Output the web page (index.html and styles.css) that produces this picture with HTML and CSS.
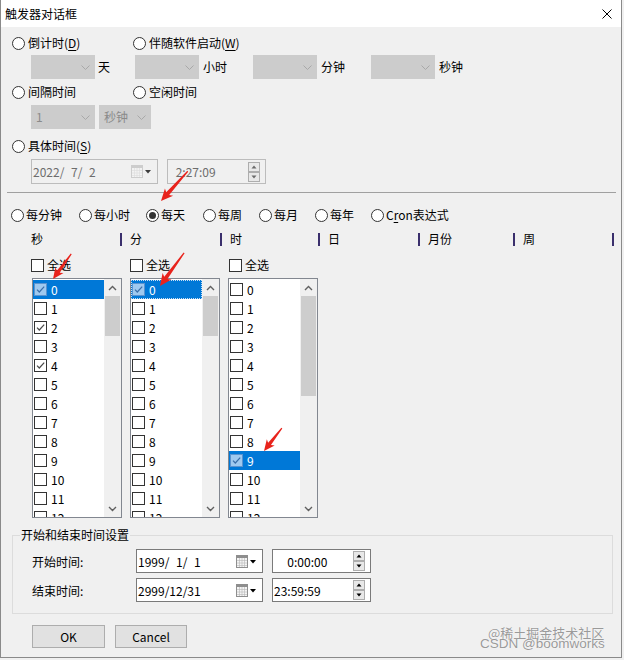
FILE: index.html
```html
<!DOCTYPE html>
<html><head><meta charset="utf-8"><link rel="stylesheet" href="styles.css"></head>
<body>
<svg class="defs" width="0" height="0">
  <symbol id="chk" viewBox="0 0 11 11"><path d="M2 5.6L4.3 8L9.2 2.6" fill="none" stroke="currentColor" stroke-width="1.2"/></symbol>
  <symbol id="chev" viewBox="0 0 9 5"><path d="M0.5 0.5L4.5 4.5L8.5 0.5" fill="none" stroke="currentColor" stroke-width="1"/></symbol>
  <symbol id="up" viewBox="0 0 9 6"><path d="M1 5L4.5 1.5L8 5" fill="none" stroke="currentColor" stroke-width="1.4"/></symbol>
  <symbol id="dn" viewBox="0 0 9 6"><path d="M1 1L4.5 4.5L8 1" fill="none" stroke="currentColor" stroke-width="1.4"/></symbol>
  <symbol id="cal" viewBox="0 0 21 13">
    <rect x="0.5" y="0.5" width="11" height="12" fill="#f4f4f4" stroke="currentColor"/>
    <rect x="1" y="1" width="10" height="2" fill="currentColor"/>
    <path d="M1 5.5H11M1 8H11M1 10.5H11M3.5 3V12.5M6 3V12.5M8.5 3V12.5" stroke="currentColor" stroke-width="0.6" opacity="0.6"/>
    <path d="M14 5H20L17 8.5Z" class="tri"/>
  </symbol>
  <symbol id="spin" viewBox="0 0 12 20">
    <rect x="0.5" y="0.5" width="11" height="9" fill="#e8e8e8" stroke="#adadad"/>
    <rect x="0.5" y="10.5" width="11" height="9" fill="#e8e8e8" stroke="#adadad"/>
    <path d="M3.5 6.5H8.5L6 3.5Z M3.5 13.5H8.5L6 16.5Z" fill="currentColor"/>
  </symbol>
</svg>
<div class="win">
  <div class="titlebar"><span class="title">触发器对话框</span><svg class="x" width="10" height="10" viewBox="0 0 10 10"><path d="M0.5 0.5L9.5 9.5M9.5 0.5L0.5 9.5" stroke="#000" stroke-width="1"/></svg></div>

  <div class="row r1">
    <div class="opt w121"><span class="radio"></span><span>倒计时(<u>D</u>)</span></div>
    <div class="opt"><span class="radio"></span><span>伴随软件启动(<u>W</u>)</span></div>
  </div>
  <div class="row crow">
    <div class="unit u104"><div class="combo w64"><span></span><svg class="chev"><use href="#chev"/></svg></div><span class="lbl l3">天</span></div>
    <div class="unit u118"><div class="combo w64"><span></span><svg class="chev"><use href="#chev"/></svg></div><span class="lbl">小时</span></div>
    <div class="unit u118"><div class="combo w64"><span></span><svg class="chev"><use href="#chev"/></svg></div><span class="lbl">分钟</span></div>
    <div class="unit"><div class="combo w64"><span></span><svg class="chev"><use href="#chev"/></svg></div><span class="lbl">秒钟</span></div>
  </div>
  <div class="row r3">
    <div class="opt w121"><span class="radio"></span><span>间隔时间</span></div>
    <div class="opt"><span class="radio"></span><span>空闲时间</span></div>
  </div>
  <div class="row crow2">
    <div class="combo w64"><span>1</span><svg class="chev"><use href="#chev"/></svg></div>
    <div class="combo w52 ml4"><span>秒钟</span><svg class="chev"><use href="#chev"/></svg></div>
  </div>
  <div class="row r5">
    <div class="opt"><span class="radio"></span><span>具体时间(<u>S</u>)</span></div>
  </div>
  <div class="row drow">
    <div class="dt dis w127"><span>2022/&#8199;7/&#8199;2</span><svg class="cal"><use href="#cal"/></svg></div>
    <div class="tm dis w99"><span>&#8199;2:27:09</span><svg class="spin"><use href="#spin"/></svg></div>
  </div>
  <div class="sep"></div>

  <div class="row freq">
    <div class="opt2 w68"><span class="radio"></span><span>每分钟</span></div>
    <div class="opt2 w67"><span class="radio"></span><span>每小时</span></div>
    <div class="opt2 w57"><span class="radio on"></span><span>每天</span></div>
    <div class="opt2 w56"><span class="radio"></span><span>每周</span></div>
    <div class="opt2 w56"><span class="radio"></span><span>每月</span></div>
    <div class="opt2 w56"><span class="radio"></span><span>每年</span></div>
    <div class="opt2"><span class="radio"></span><span>C<u>r</u>on表达式</span></div>
  </div>

  <div class="hdr">
    <span class="h first">秒</span><span class="bar"></span>
    <span class="h">分</span><span class="bar"></span>
    <span class="h">时</span><span class="bar"></span>
    <span class="h">日</span><span class="bar"></span>
    <span class="h">月份</span><span class="bar"></span>
    <span class="h">周</span><span class="bar"></span>
  </div>

  <div class="row allrow">
    <div class="all u99"><span class="cb"></span><span>全选</span></div>
    <div class="all u99"><span class="cb"></span><span>全选</span></div>
    <div class="all"><span class="cb"></span><span>全选</span></div>
  </div>

  <div class="lists">
    <div class="list">
      <div class="items">
        <div class="item sel"><span class="cb on"><svg><use href="#chk"/></svg></span>0</div>
        <div class="item"><span class="cb"></span>1</div>
        <div class="item"><span class="cb on"><svg><use href="#chk"/></svg></span>2</div>
        <div class="item"><span class="cb"></span>3</div>
        <div class="item"><span class="cb on"><svg><use href="#chk"/></svg></span>4</div>
        <div class="item"><span class="cb"></span>5</div>
        <div class="item"><span class="cb"></span>6</div>
        <div class="item"><span class="cb"></span>7</div>
        <div class="item"><span class="cb"></span>8</div>
        <div class="item"><span class="cb"></span>9</div>
        <div class="item"><span class="cb"></span>10</div>
        <div class="item"><span class="cb"></span>11</div>
        <div class="item"><span class="cb"></span>12</div>
      </div>
      <div class="sb"><div class="sbb"><svg class="arr"><use href="#up"/></svg></div><div class="thumb t40"></div><div class="track"></div><div class="sbb"><svg class="arr"><use href="#dn"/></svg></div></div>
    </div>
    <div class="list">
      <div class="items">
        <div class="item sel focus"><span class="cb on"><svg><use href="#chk"/></svg></span>0</div>
        <div class="item"><span class="cb"></span>1</div>
        <div class="item"><span class="cb"></span>2</div>
        <div class="item"><span class="cb"></span>3</div>
        <div class="item"><span class="cb"></span>4</div>
        <div class="item"><span class="cb"></span>5</div>
        <div class="item"><span class="cb"></span>6</div>
        <div class="item"><span class="cb"></span>7</div>
        <div class="item"><span class="cb"></span>8</div>
        <div class="item"><span class="cb"></span>9</div>
        <div class="item"><span class="cb"></span>10</div>
        <div class="item"><span class="cb"></span>11</div>
        <div class="item"><span class="cb"></span>12</div>
      </div>
      <div class="sb"><div class="sbb"><svg class="arr"><use href="#up"/></svg></div><div class="thumb t40"></div><div class="track"></div><div class="sbb"><svg class="arr"><use href="#dn"/></svg></div></div>
    </div>
    <div class="list">
      <div class="items">
        <div class="item"><span class="cb"></span>0</div>
        <div class="item"><span class="cb"></span>1</div>
        <div class="item"><span class="cb"></span>2</div>
        <div class="item"><span class="cb"></span>3</div>
        <div class="item"><span class="cb"></span>4</div>
        <div class="item"><span class="cb"></span>5</div>
        <div class="item"><span class="cb"></span>6</div>
        <div class="item"><span class="cb"></span>7</div>
        <div class="item"><span class="cb"></span>8</div>
        <div class="item sel"><span class="cb on"><svg><use href="#chk"/></svg></span>9</div>
        <div class="item"><span class="cb"></span>10</div>
        <div class="item"><span class="cb"></span>11</div>
        <div class="item"><span class="cb"></span>12</div>
      </div>
      <div class="sb"><div class="sbb"><svg class="arr"><use href="#up"/></svg></div><div class="thumb t100"></div><div class="track"></div><div class="sbb"><svg class="arr"><use href="#dn"/></svg></div></div>
    </div>
  </div>

  <div class="group">
    <div class="gtitle"><span>开始和结束时间设置</span></div>
    <div class="grow">
      <span class="glbl">开始时间:</span>
      <div class="dt en w127"><span>1999/&#8199;1/&#8199;1</span><svg class="cal"><use href="#cal"/></svg></div>
      <div class="tm en w99 ml9"><span>&#8199;&#8199;0:00:00</span><svg class="spin"><use href="#spin"/></svg></div>
    </div>
    <div class="grow">
      <span class="glbl">结束时间:</span>
      <div class="dt en w127"><span>2999/12/31</span><svg class="cal"><use href="#cal"/></svg></div>
      <div class="tm en w99 ml9"><span>23:59:59</span><svg class="spin"><use href="#spin"/></svg></div>
    </div>
  </div>

  <div class="btns">
    <div class="btn">OK</div>
    <div class="btn">Cancel</div>
  </div>

  <svg class="arrows" width="624" height="660" viewBox="0 0 624 660">
    <g fill="#e8231c">
      <polygon transform="translate(161,201) rotate(132)" points="-40,-0.6 -10,-2 -12,-5.5 0,0 -12,5.5 -10,2 -40,0.6"/>
      <polygon transform="translate(53,279) rotate(126)" points="-31,-0.6 -9,-1.8 -11,-5 0,0 -11,5 -9,1.8 -31,0.6"/>
      <polygon transform="translate(160,286) rotate(126)" points="-41,-0.6 -10,-2 -12,-5.5 0,0 -12,5.5 -10,2 -41,0.6"/>
      <polygon transform="translate(264,451) rotate(128)" points="-29,-0.6 -9,-1.8 -11,-5 0,0 -11,5 -9,1.8 -29,0.6"/>
    </g>
  </svg>
  <div class="wm wm1">@稀土掘金技术社区</div>
  <div class="wm wm2">CSDN @boomworks</div>
</div>
</body></html>
```
FILE: styles.css
```css
* { box-sizing: border-box; }
html, body { margin: 0; padding: 0; }
body {
  background: #f0f0f0;
  font-family: "Noto Sans CJK SC", "Noto Sans", sans-serif;
  font-size: 12px;
  color: #000;
  width: 624px;
  height: 660px;
  overflow: hidden;
}
.defs { position: absolute; width: 0; height: 0; }
u { text-decoration: underline; text-underline-offset: 2px; }

.win {
  position: relative;
  width: 622px;
  height: 658px;
  background: #f0f0f0;
  border: 1px solid #8a8a8a;
  border-top: 0;
}
.titlebar {
  height: 27px;
  background: #fff;
  display: flex;
  align-items: center;
  justify-content: space-between;
  padding: 0 9px 0 4px;
  line-height: 16px;
}
.x { display: block; }

.row { display: flex; align-items: center; line-height: 18px; }
.r1 { margin-top: 7px; height: 18px; margin-left: 11px; }
.crow { margin-top: 3px; height: 24px; margin-left: 30px; }
.r3 { margin-top: 4px; height: 18px; margin-left: 11px; }
.crow2 { margin-top: 4px; height: 24px; margin-left: 30px; }
.r5 { margin-top: 8px; height: 18px; margin-left: 11px; }
.drow { margin-top: 4px; height: 25px; margin-left: 30px; }

.opt { display: flex; align-items: center; gap: 3px; }
.opt2 { display: flex; align-items: center; gap: 2px; }
.w121 { width: 121px; flex: none; }
.w68 { width: 68px; flex: none; }
.w67 { width: 67px; flex: none; }
.w57 { width: 57px; flex: none; }
.w56 { width: 56px; flex: none; }

.radio {
  width: 13px; height: 13px; flex: none;
  border: 1px solid #333;
  border-radius: 50%;
  background: #fff;
  display: flex; align-items: center; justify-content: center;
}
.radio.on::after {
  content: "";
  width: 7px; height: 7px;
  border-radius: 50%;
  background: #333;
}

.unit { display: flex; align-items: center; flex: none; }
.u104 { width: 104px; }
.u118 { width: 118px; }
.lbl { margin-left: 4px; }
.lbl.l3 { margin-left: 3px; }

.combo {
  height: 24px;
  background: #cccccc;
  border: 1px solid #cccccc;
  display: flex; align-items: center; justify-content: space-between;
  padding: 0 4px 0 4px;
  color: #8a8a8a;
  flex: none;
}
.w64 { width: 64px; }
.w52 { width: 52px; }
.ml4 { margin-left: 4px; }
.ml9 { margin-left: 9px; }
.chev { width: 9px; height: 5px; color: #a8a8a8; display: block; }

.dt, .tm {
  height: 25px;
  display: flex; align-items: center; justify-content: space-between;
  padding: 0 5px 0 1px;
  flex: none;
}
.dt.dis, .tm.dis { border: 1px solid #bcbcbc; background: #f0f0f0; color: #6d6d6d; }
.dt.en, .tm.en { border: 1px solid #7a7a7a; background: #fff; color: #000; height: 24px; }
.w127 { width: 127px; }
.w99 { width: 99px; }
.tm.dis { margin-left: 9px; }
.cal { width: 21px; height: 13px; display: block; color: #8e8e8e; }
.dis .cal { color: #c2c2c2; }
.dis .cal .tri, .cal .tri { fill: #5a6a8c; }
.dis .cal { opacity: 0.75; }
.spin { width: 12px; height: 20px; display: block; color: #000; }
.dis .spin { color: #6a6a6a; }

.sep {
  margin-top: 8px;
  margin-left: 6px;
  width: 609px;
  height: 1px;
  background: #a0a0a0;
}
.freq { margin-top: 13px; height: 18px; margin-left: 10px; }

.hdr {
  margin-top: 6px;
  margin-left: 30px;
  height: 18px;
  display: grid;
  grid-template-columns: 89px 2px 98px 2px 96px 2px 98px 2px 93px 2px 97px 2px;
  align-items: center;
  line-height: 18px;
}
.h { padding-left: 8px; }
.h.first { padding-left: 0; }
.bar { width: 2px; height: 13px; background: #3a2f6c; }

.allrow { margin-top: 8px; height: 18px; margin-left: 30px; }
.all { display: flex; align-items: center; gap: 3px; flex: none; }
.u99 { width: 99px; }

.cb {
  width: 13px; height: 13px; flex: none;
  border: 1px solid #333;
  background: #fff;
  color: #4a4a4a;
}
.cb svg { width: 11px; height: 11px; display: block; }

.lists { margin-top: 4px; margin-left: 31px; display: flex; gap: 8px; }
.list {
  width: 90px; height: 240px;
  border: 1px solid #828790;
  background: #fff;
  display: flex;
}
.items { flex: 1; overflow: hidden; padding-top: 1px; }
.item {
  height: 19px;
  display: flex; align-items: center;
  gap: 4px;
  padding-left: 1px;
  line-height: 19px;
}
.item.sel { background: #0078d7; color: #fff; }
.item.sel .cb { background: #9fc9ef; border-color: #5a93cf; color: #3a6ea8; }
.item.focus { outline: 1px dotted #c9dff4; outline-offset: -1px; }
.sb {
  width: 17px; flex: none;
  background: #f0f0f0;
  display: flex; flex-direction: column;
}
.sbb { height: 17px; display: flex; align-items: center; justify-content: center; flex: none; }
.arr { width: 9px; height: 6px; color: #606060; display: block; }
.thumb { margin: 0 1px; background: #cdcdcd; flex: none; }
.t40 { height: 40px; }
.t100 { height: 100px; }
.track { flex: 1; }

.group {
  margin-top: 17px;
  margin-left: 11px;
  width: 601px;
  border: 1px solid #dcdcdc;
  padding-bottom: 11px;
}
.gtitle { margin-top: -10px; height: 18px; line-height: 18px; padding-left: 7px; }
.gtitle span { background: #f0f0f0; padding: 0 1px; }
.grow { margin-top: 5px; height: 24px; display: flex; align-items: center; padding-left: 19px; }
.glbl { width: 104px; flex: none; }

.btns { margin-top: 11px; margin-left: 31px; display: flex; gap: 10px; }
.btn {
  width: 73px; height: 23px;
  background: #e1e1e1;
  border: 1px solid #adadad;
  display: flex; align-items: center; justify-content: center;
  line-height: 16px;
}
.btn + .btn { width: 72px; }

.arrows { position: absolute; left: -1px; top: 0; pointer-events: none; }
.wm {
  position: absolute;
  color: rgba(110, 110, 110, 0.7);
  text-shadow: 0 0 1px rgba(255,255,255,0.9);
  white-space: nowrap;
  line-height: 16px;
}
.wm1 { left: 487px; top: 625px; font-size: 13px; font-family: "Noto Sans CJK SC", sans-serif; }
.wm2 { left: 479px; top: 636px; font-size: 13.5px; font-family: "Liberation Sans", sans-serif; }
```
